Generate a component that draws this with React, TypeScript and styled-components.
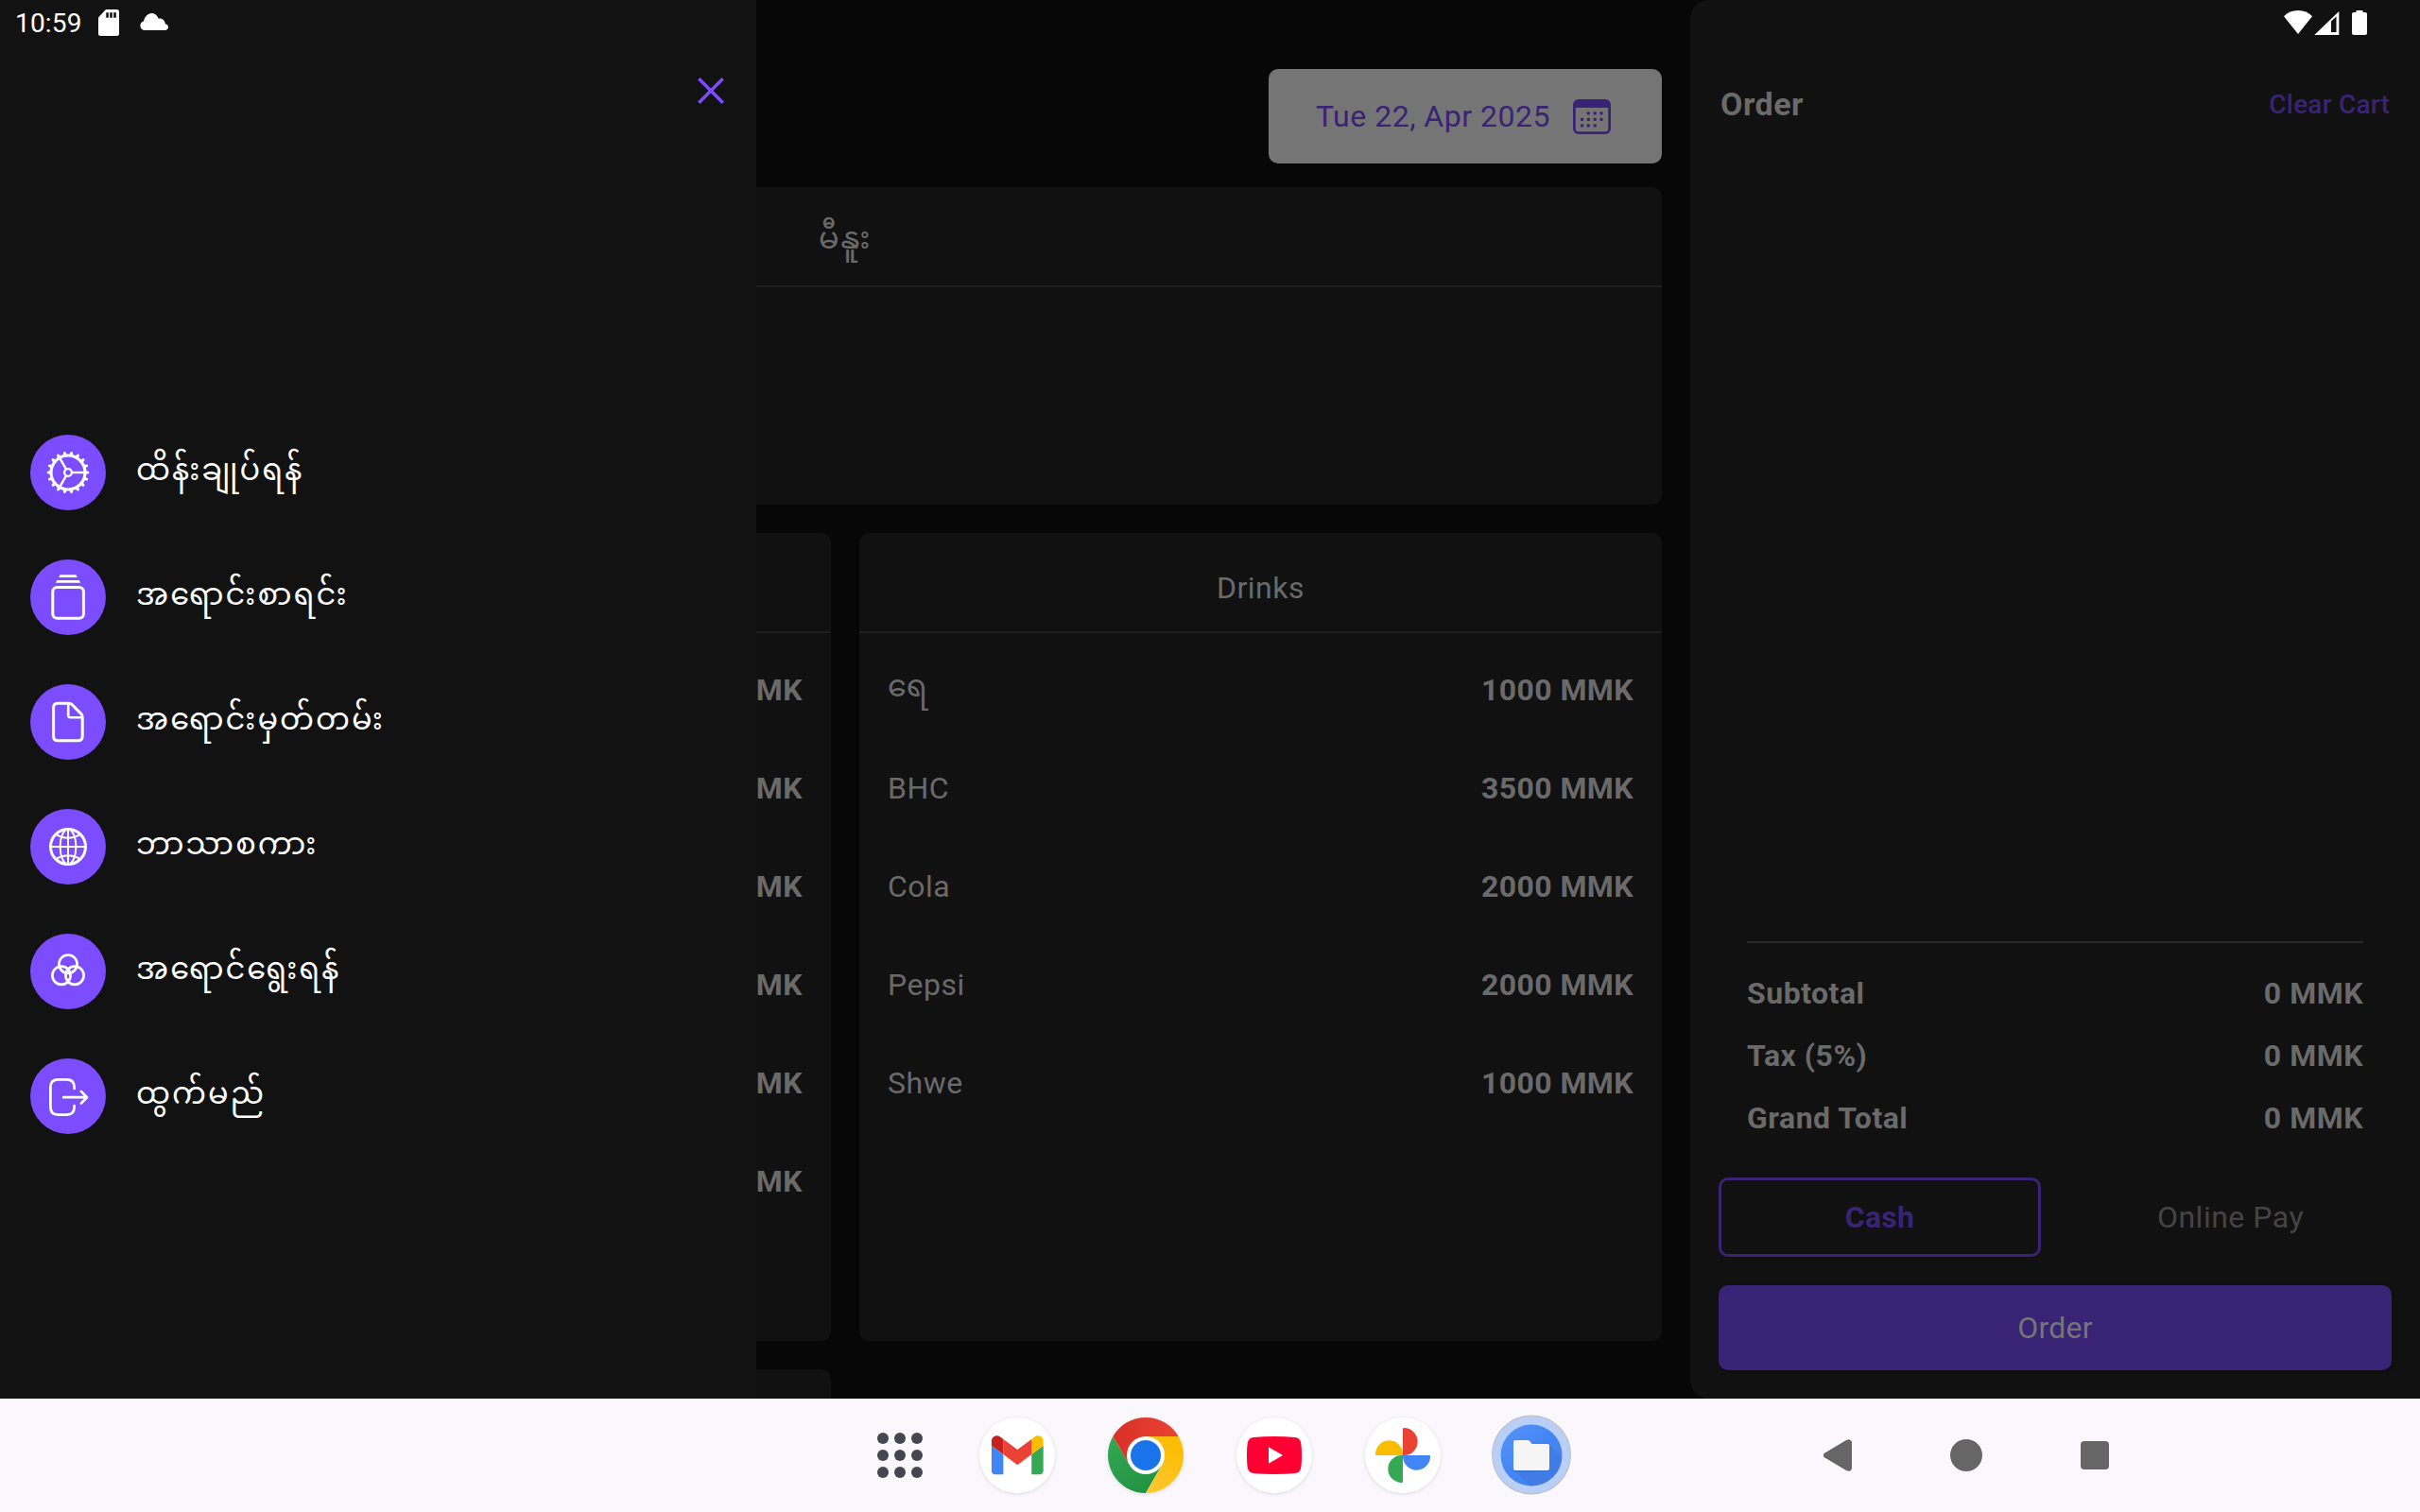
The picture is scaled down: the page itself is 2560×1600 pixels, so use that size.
import React from "react";
import styled, { createGlobalStyle, css } from "styled-components";

const color = {
  page: "#070707",
  surface: "#111111",
  drawer: "#121212",
  divider: "#1f1f1f",
  text: "#6a6a6a",
  accent: "#7c4dff",
  accentDim: "#392375",
};

const Global = createGlobalStyle`
  html, body { margin: 0; padding: 0; background: #070707; }
  * { box-sizing: border-box; }
  svg { display: block; flex: none; }
`;

const Device = styled.div`
  position: relative;
  width: 2560px;
  height: 1600px;
  overflow: hidden;
  display: flex;
  flex-direction: column;
  background: ${color.page};
  font-family: Roboto, "Noto Sans Myanmar", "Noto Sans", sans-serif;
  font-size: 32px;
  letter-spacing: 0.5px;
  color: ${color.text};
`;

const Screen = styled.div`
  display: flex;
  flex: none;
  height: 1480px;
  overflow: hidden;
`;

const Catalog = styled.main`
  width: 1788px;
  height: 1480px;
  overflow: hidden;
  padding: 73px 30px 0;
  display: flex;
  flex-direction: column;
`;

const DateButton = styled.button`
  flex: none;
  align-self: flex-end;
  width: 416px;
  height: 100px;
  margin-bottom: 25px;
  padding: 0 54px 0 50px;
  border: 0;
  border-radius: 10px;
  display: flex;
  align-items: center;
  justify-content: space-between;
  background: #757575;
  color: ${color.accentDim};
  font: inherit;
  letter-spacing: inherit;
  white-space: nowrap;
`;

const Card = styled.section<{ $height: number }>`
  flex: none;
  height: ${(p) => p.$height}px;
  border-radius: 10px;
  background: ${color.surface};
`;

const CardTitle = styled.h2`
  margin: 0;
  height: 106px;
  border-bottom: 2px solid ${color.divider};
  padding-top: 12px;
  display: flex;
  align-items: center;
  justify-content: center;
  font-size: 32px;
  font-weight: 400;
`;

const Burmese = styled.span`
  letter-spacing: 1.6px;
`;

const CardGrid = styled.div`
  flex: none;
  margin-top: 30px;
  display: grid;
  grid-template-columns: 849px 849px;
  gap: 30px;
`;

const ItemList = styled.div`
  padding: 8px 30px;
`;

const ItemRow = styled.div`
  height: 104px;
  display: flex;
  align-items: center;
  justify-content: space-between;
`;

const Price = styled.span`
  margin-left: auto;
  font-weight: 700;
  letter-spacing: 0.4px;
`;

const OrderPanel = styled.aside`
  width: 772px;
  height: 1480px;
  padding: 0 30px 30px;
  border-radius: 20px 0 0 20px;
  background: ${color.surface};
  display: flex;
  flex-direction: column;
`;

const PanelHeader = styled.header`
  height: 220px;
  padding: 0 2px;
  display: flex;
  align-items: center;
  justify-content: space-between;
`;

const PanelTitle = styled.h1`
  margin: 0;
  font-size: 34px;
  font-weight: 700;
`;

const ClearCart = styled.span`
  font-size: 28px;
  font-weight: 500;
  letter-spacing: 0.2px;
  color: ${color.accentDim};
`;

const Totals = styled.div`
  margin: auto 30px 30px;
  border-top: 2px solid #2a2a2a;
  padding-top: 20px;
`;

const TotalRow = styled.div`
  height: 66px;
  display: flex;
  align-items: center;
  justify-content: space-between;
  font-weight: 700;
`;

const PayOptions = styled.div`
  display: flex;
  gap: 30px;
  margin-bottom: 30px;
`;

const PayOption = styled.button<{ $active?: boolean }>`
  flex: 1;
  height: 84px;
  padding: 0;
  border: 3px solid transparent;
  border-radius: 10px;
  background: none;
  font: inherit;
  letter-spacing: inherit;
  color: #444444;
  ${(p) =>
    p.$active &&
    css`
      border-color: ${color.accentDim};
      color: ${color.accentDim};
      font-weight: 700;
      letter-spacing: 0.3px;
    `}
`;

const SubmitOrder = styled.button`
  height: 90px;
  border: 0;
  border-radius: 10px;
  background: ${color.accentDim};
  color: #757575;
  font: inherit;
  letter-spacing: 0.2px;
  box-shadow: 0 2px 4px rgba(0, 0, 0, 0.35);
`;

const Drawer = styled.nav`
  position: absolute;
  left: 0;
  top: 0;
  width: 800px;
  height: 1480px;
  background: ${color.drawer};
  display: flex;
  flex-direction: column;
`;

const DrawerTop = styled.div`
  height: 460px;
  padding: 82px 34px 0;
  display: flex;
  justify-content: flex-end;
`;

const DrawerItems = styled.div`
  display: flex;
  flex-direction: column;
  gap: 52px;
  padding-left: 32px;
`;

const DrawerItem = styled.div`
  height: 80px;
  display: flex;
  align-items: center;
  gap: 32px;
  color: #ffffff;
`;

const IconDisc = styled.span`
  width: 80px;
  height: 80px;
  border-radius: 50%;
  background: ${color.accent};
  display: flex;
  align-items: center;
  justify-content: center;
`;

const DrawerLabel = styled.span`
  padding-bottom: 7px;
  white-space: nowrap;
  line-height: 48px;
  letter-spacing: 2px;
`;

const StatusBar = styled.div`
  position: absolute;
  inset: 0 0 auto 0;
  height: 48px;
  padding: 0 56px 0 16px;
  display: flex;
  align-items: center;
  color: #ffffff;
`;

const Clock = styled.span`
  width: 88px;
  font-size: 28px;
  letter-spacing: 0.2px;
`;

const Taskbar = styled.footer`
  flex: none;
  height: 120px;
  padding: 0 314px 0 912px;
  background: #faf8fd;
  display: flex;
  align-items: center;
  justify-content: space-between;
`;

const AppsButton = styled.div`
  width: 80px;
  height: 80px;
  margin-right: 44px;
`;

const Dock = styled.div`
  margin-right: auto;
  display: flex;
  gap: 56px;
`;

const DockSlot = styled.div<{ $raised?: boolean }>`
  width: 80px;
  height: 80px;
  border-radius: 50%;
  ${(p) =>
    p.$raised &&
    css`
      background: #ffffff;
      box-shadow: 0 1px 4px rgba(0, 0, 0, 0.12);
    `}
`;

const NavButtons = styled.div`
  display: flex;
  gap: 76px;
`;

const ring = (count: number) => Array.from({ length: count }, (_, i) => (i * 360) / count);

const DiscSvg = ({ children }: { children: React.ReactNode }) => (
  <svg width="80" height="80" viewBox="-40 -40 80 80" fill="none" stroke="#fff" strokeWidth="3">
    {children}
  </svg>
);

const GearIcon = () => (
  <DiscSvg>
    <circle r="18" strokeWidth="3.2" />
    <circle r="3.9" strokeWidth="2.4" />
    {ring(18).map((a) => (
      <path key={a} d="M18.6 -2.1L22 -1.1Q22.8 0 22 1.1L18.6 2.1Z" fill="#fff" stroke="none" transform={`rotate(${a})`} />
    ))}
    {ring(3).map((a) => (
      <path key={a} d="M4.5 0H18" strokeWidth="2.4" transform={`rotate(${a})`} />
    ))}
  </DiscSvg>
);

const StackIcon = () => (
  <DiscSvg>
    <rect x="-16.2" y="-10.6" width="32.6" height="32.8" rx="4.5" />
    <path d="M-8.6 -23.7H8.4L9.6 -21H-9.8ZM-11.6 -18H11.6L13.2 -15.2H-13.2Z" fill="#fff" stroke="none" />
  </DiscSvg>
);

const DocumentIcon = () => (
  <DiscSvg>
    <path d="M-11 -19.8H0.8Q2.8 -19.8 4.2 -18.4L13.8 -8.6Q15.2 -7.2 15.2 -5V15Q15.2 19.8 10.4 19.8H-10.8Q-15.4 19.8 -15.4 15V-15Q-15.4 -19.8 -11 -19.8Z" />
    <path d="M0.2 -19V-7Q0.2 -4.8 2.4 -4.8H14.6" strokeWidth="2.6" />
  </DiscSvg>
);

const GlobeIcon = () => (
  <DiscSvg>
    <circle r="18.5" />
    <g strokeWidth="2">
      <ellipse rx="8.4" ry="18.5" />
      <path d="M0 -18V18M-18 0H18M-13 -13Q0 -5.4 13 -13M-13 13Q0 5.4 13 13" />
    </g>
  </DiscSvg>
);

const CirclesIcon = () => (
  <DiscSvg>
    <g strokeWidth="2.7">
      <circle cx="0" cy="-7.8" r="9.6" />
      <circle cx="-7" cy="4.2" r="9.6" />
      <circle cx="7" cy="4.2" r="9.6" />
    </g>
  </DiscSvg>
);

const ExitIcon = () => (
  <DiscSvg>
    <path
      d="M6.6 -8V-9.5Q6.6 -17.6 -1.6 -17.6H-10.4Q-18.6 -17.6 -18.6 -9.5V11.5Q-18.6 19.6 -10.4 19.6H-1.6Q6.6 19.6 6.6 11.5V10"
      strokeWidth="2.7"
      strokeLinecap="round"
    />
    <path d="M-4.8 1.2H20M13.9 -5.1L20 1.2L13.9 7.5" strokeWidth="2.7" strokeLinecap="round" strokeLinejoin="round" />
  </DiscSvg>
);

const CloseIcon = () => (
  <svg width="28" height="28" viewBox="0 0 28 28" fill="none" stroke={color.accent} strokeWidth="3.5">
    <path d="M1.3 1.3L26.7 26.7M26.7 1.3L1.3 26.7" />
  </svg>
);

const calendarDots = [
  [16.3, 23.2, 30].map((x) => [x, 14.8]),
  [9.6, 16.3, 23.2, 30].map((x) => [x, 21.4]),
  [9.6, 16.3, 23.2].map((x) => [x, 27.8]),
].flat();

const CalendarIcon = () => (
  <svg width="40" height="37" viewBox="0 0 40 37">
    <rect x="1.4" y="1.4" width="37.2" height="34.2" rx="4.4" fill="none" stroke={color.accentDim} strokeWidth="2.8" />
    <path d="M1 9.1V5Q1 1 5 1H35Q39 1 39 5V9.1Z" fill={color.accentDim} />
    {calendarDots.map(([x, y]) => (
      <rect key={`${x}-${y}`} x={x - 1.6} y={y - 1.6} width="3.2" height="3.2" rx="1" fill={color.accentDim} />
    ))}
  </svg>
);

const SdCardIcon = () => (
  <svg width="22" height="28" viewBox="0 0 22 28">
    <path d="M8 0H19.5Q22 0 22 2.5V25.5Q22 28 19.5 28H2.5Q0 28 0 25.5V8.5Z" fill="#fff" />
    <path d="M8.3 3.2H10.8V8.8H8.3ZM12.2 3.2H14.8V8.8H12.2ZM16.2 3.2H18.8V8.8H16.2Z" fill="#121212" />
  </svg>
);

const CloudSvg = styled.svg`
  margin: 0 auto 2px 22px;
`;

const CloudIcon = () => (
  <CloudSvg width="30" height="18" viewBox="0 0 30 18">
    <path d="M4.6 18A4.8 4.8 0 0 1 4 8.6C5 3.6 8.4 0 12.4 0C15.8 0 18.4 2.4 19.6 5.6C23.6 5.4 26.4 7.4 26.8 11.2C29 11.6 30 13 30 14.6C30 16.6 28.6 18 26.4 18Z" fill="#fff" />
  </CloudSvg>
);

const SystemIcons = () => (
  <svg width="88" height="28" viewBox="0 0 88 28">
    <g fill="#fff">
      <path d="M0 7.2Q6 1 15 1Q24 1 30 7.2L15 26Z" />
      <path d="M58.3 2V27H32.3Z" />
      <path d="M76.5 1H83.5V3H86Q88 3 88 5V25Q88 27 86 27H74Q72 27 72 25V5Q72 3 74 3H76.5Z" />
    </g>
    <path d="M50 12.5L55.5 7.5V24H50Z" fill="#111" />
  </svg>
);

const AppsIcon = () => (
  <svg width="80" height="80" viewBox="-40 -40 80 80" fill="#45464f">
    {[-18, 0, 18].flatMap((y) => [-18, 0, 18].map((x) => <circle key={`${x},${y}`} cx={x} cy={y} r="6" />))}
  </svg>
);

const GmailIcon = () => (
  <svg width="80" height="80" viewBox="-40 -40 80 80">
    <g transform="translate(0.3 -0.3) scale(0.622) translate(-96 -75)">
      <path fill="#4285f4" d="M58 108h14V74L52 59v43c0 3.32 2.69 6 6 6" />
      <path fill="#34a853" d="M120 108h14c3.32 0 6-2.69 6-6V59l-20 15" />
      <path fill="#fbbc04" d="M120 48v26l20-15v-8c0-7.42-8.47-11.65-14.4-7.2" />
      <path fill="#ea4335" d="M72 74V48l24 18 24-18v26L96 92" />
      <path fill="#c5221f" d="M52 51v8l20 15V48l-5.6-4.2c-5.94-4.45-14.4-.22-14.4 7.2" />
    </g>
  </svg>
);

const ChromeIcon = () => (
  <svg width="80" height="80" viewBox="-40 -40 80 80">
    <defs>
      <linearGradient id="chromeRed"><stop stopColor="#d93025" /><stop offset="1" stopColor="#ea4335" /></linearGradient>
      <linearGradient id="chromeYellow" x1="0" y1="1" x2="0.4" y2="0"><stop stopColor="#fcc934" /><stop offset="1" stopColor="#fbbc04" /></linearGradient>
      <linearGradient id="chromeGreen" x1="1" y1="1" x2="0" y2="0"><stop stopColor="#1e8e3e" /><stop offset="1" stopColor="#34a853" /></linearGradient>
    </defs>
    <path fill="url(#chromeGreen)" d="M0 40A40 40 0 0 1 -34.64 -20L-17.3 10L0 5L17.3 10Z" />
    <path fill="url(#chromeYellow)" d="M34.64 -20A40 40 0 0 1 0 40L17.3 10L0 0V-20Z" />
    <path fill="url(#chromeRed)" d="M-34.64 -20A40 40 0 0 1 34.64 -20H0V0L-17.3 10Z" />
    <circle r="20" fill="#fff" />
    <circle r="16" fill="#1a73e8" />
  </svg>
);

const YouTubeIcon = () => (
  <svg width="80" height="80" viewBox="-40 -40 80 80">
    <path d="M-29 0Q-29 -10 -28 -14Q-26.8 -18.4 -22 -19Q-12 -20 0 -20T22 -19Q26.8 -18.4 28 -14Q29 -10 29 0T28 14Q26.8 18.4 22 19Q12 20 0 20T-22 19Q-26.8 18.4 -28 14Q-29 10 -29 0Z" fill="#ff0033" />
    <path d="M-6 -8.7L9 0L-6 8.7Z" fill="#fff" />
  </svg>
);

const petals = [
  { angle: 0, fill: "#ea4335" },
  { angle: 90, fill: "#4285f4" },
  { angle: 180, fill: "#34a853" },
  { angle: 270, fill: "#fbbc04" },
];

const PhotosIcon = () => (
  <svg width="80" height="80" viewBox="-40 -40 80 80">
    {petals.map((p) => (
      <path key={p.angle} d="M0 0V-28Q0 -29 1 -29A14.5 14.5 0 0 1 1.3 0Z" fill={p.fill} transform={`rotate(${p.angle})`} />
    ))}
  </svg>
);

const FilesSvg = styled.svg`
  margin: -4px;
`;

const folderPath = "M-19 -14Q-19 -16 -17 -16H-4Q-2.6 -16 -1.8 -15L0.5 -12H17Q19 -12 19 -10V14Q19 16 17 16H-17Q-19 16 -19 14Z";

const FilesIcon = () => (
  <FilesSvg width="88" height="88" viewBox="-44 -44 88 88">
    <defs>
      <linearGradient id="filesBlue" x1="0" y1="0" x2="1" y2="1"><stop stopColor="#5a94f6" /><stop offset="0.5" stopColor="#4285f4" /><stop offset="1" stopColor="#4a83e8" /></linearGradient>
      <clipPath id="filesClip"><circle r="32.5" /></clipPath>
    </defs>
    <circle r="41.4" fill="#bacff8" stroke="#bfc1c8" strokeWidth="1.2" cy="-0.5" />
    <circle r="32.5" fill="url(#filesBlue)" />
    <path d="M19 -11L44 14V44H10L-18 16Z" fill="#3d77dc" opacity="0.55" clipPath="url(#filesClip)" />
    <path d={folderPath} fill="#2f63bd" opacity="0.45" transform="translate(0 1.2)" />
    <path d={folderPath} fill="#f5f5f5" />
  </FilesSvg>
);

const NavSvg = ({ children }: { children: React.ReactNode }) => (
  <svg width="60" height="60" viewBox="-30 -30 60 60" fill="#666666">
    {children}
  </svg>
);

const drawerItems = [
  { label: "ထိန်းချုပ်ရန်", icon: <GearIcon /> },
  { label: "အရောင်းစာရင်း", icon: <StackIcon /> },
  { label: "အရောင်းမှတ်တမ်း", icon: <DocumentIcon /> },
  { label: "ဘာသာစကား", icon: <GlobeIcon /> },
  { label: "အရောင်ရွေးရန်", icon: <CirclesIcon /> },
  { label: "ထွက်မည်", icon: <ExitIcon /> },
];

const drinks = [
  { name: <Burmese>ရေ</Burmese>, price: 1000 },
  { name: "BHC", price: 3500 },
  { name: "Cola", price: 2000 },
  { name: "Pepsi", price: 2000 },
  { name: "Shwe", price: 1000 },
];

const totals = ["Subtotal", "Tax (5%)", "Grand Total"];

export default function App() {
  return (
    <Device>
      <Global />
      <Screen>
        <Catalog>
          <DateButton>
            Tue 22, Apr 2025
            <CalendarIcon />
          </DateButton>
          <Card $height={336}>
            <CardTitle>
              <Burmese>မီနူး</Burmese>
            </CardTitle>
          </Card>
          <CardGrid>
            <Card $height={855}>
              <CardTitle />
              <ItemList>
                {[1, 2, 3, 4, 5, 6].map((n) => (
                  <ItemRow key={n}>
                    <Price>MMK</Price>
                  </ItemRow>
                ))}
              </ItemList>
            </Card>
            <Card $height={855}>
              <CardTitle>Drinks</CardTitle>
              <ItemList>
                {drinks.map((d, i) => (
                  <ItemRow key={i}>
                    <span>{d.name}</span>
                    <Price>{d.price} MMK</Price>
                  </ItemRow>
                ))}
              </ItemList>
            </Card>
            <Card $height={855} />
          </CardGrid>
        </Catalog>
        <OrderPanel>
          <PanelHeader>
            <PanelTitle>Order</PanelTitle>
            <ClearCart>Clear Cart</ClearCart>
          </PanelHeader>
          <Totals>
            {totals.map((label) => (
              <TotalRow key={label}>
                <span>{label}</span>
                <span>0 MMK</span>
              </TotalRow>
            ))}
          </Totals>
          <PayOptions>
            <PayOption $active>Cash</PayOption>
            <PayOption>Online Pay</PayOption>
          </PayOptions>
          <SubmitOrder>Order</SubmitOrder>
        </OrderPanel>
      </Screen>
      <Drawer>
        <DrawerTop>
          <CloseIcon />
        </DrawerTop>
        <DrawerItems>
          {drawerItems.map((item) => (
            <DrawerItem key={item.label}>
              <IconDisc>{item.icon}</IconDisc>
              <DrawerLabel>{item.label}</DrawerLabel>
            </DrawerItem>
          ))}
        </DrawerItems>
      </Drawer>
      <StatusBar>
        <Clock>10:59</Clock>
        <SdCardIcon />
        <CloudIcon />
        <SystemIcons />
      </StatusBar>
      <Taskbar>
        <AppsButton><AppsIcon /></AppsButton>
        <Dock>
          <DockSlot $raised><GmailIcon /></DockSlot>
          <DockSlot $raised><ChromeIcon /></DockSlot>
          <DockSlot $raised><YouTubeIcon /></DockSlot>
          <DockSlot $raised><PhotosIcon /></DockSlot>
          <DockSlot><FilesIcon /></DockSlot>
        </Dock>
        <NavButtons>
          <NavSvg><path d="M-14 2.2Q-16.5 0 -14 -2.2L9 -16Q14 -18.5 15 -13.5V13.5Q14 18.5 9 16Z" /></NavSvg>
          <NavSvg><circle r="17" /></NavSvg>
          <NavSvg><rect x="-15" y="-15" width="30" height="30" rx="4" /></NavSvg>
        </NavButtons>
      </Taskbar>
    </Device>
  );
}
